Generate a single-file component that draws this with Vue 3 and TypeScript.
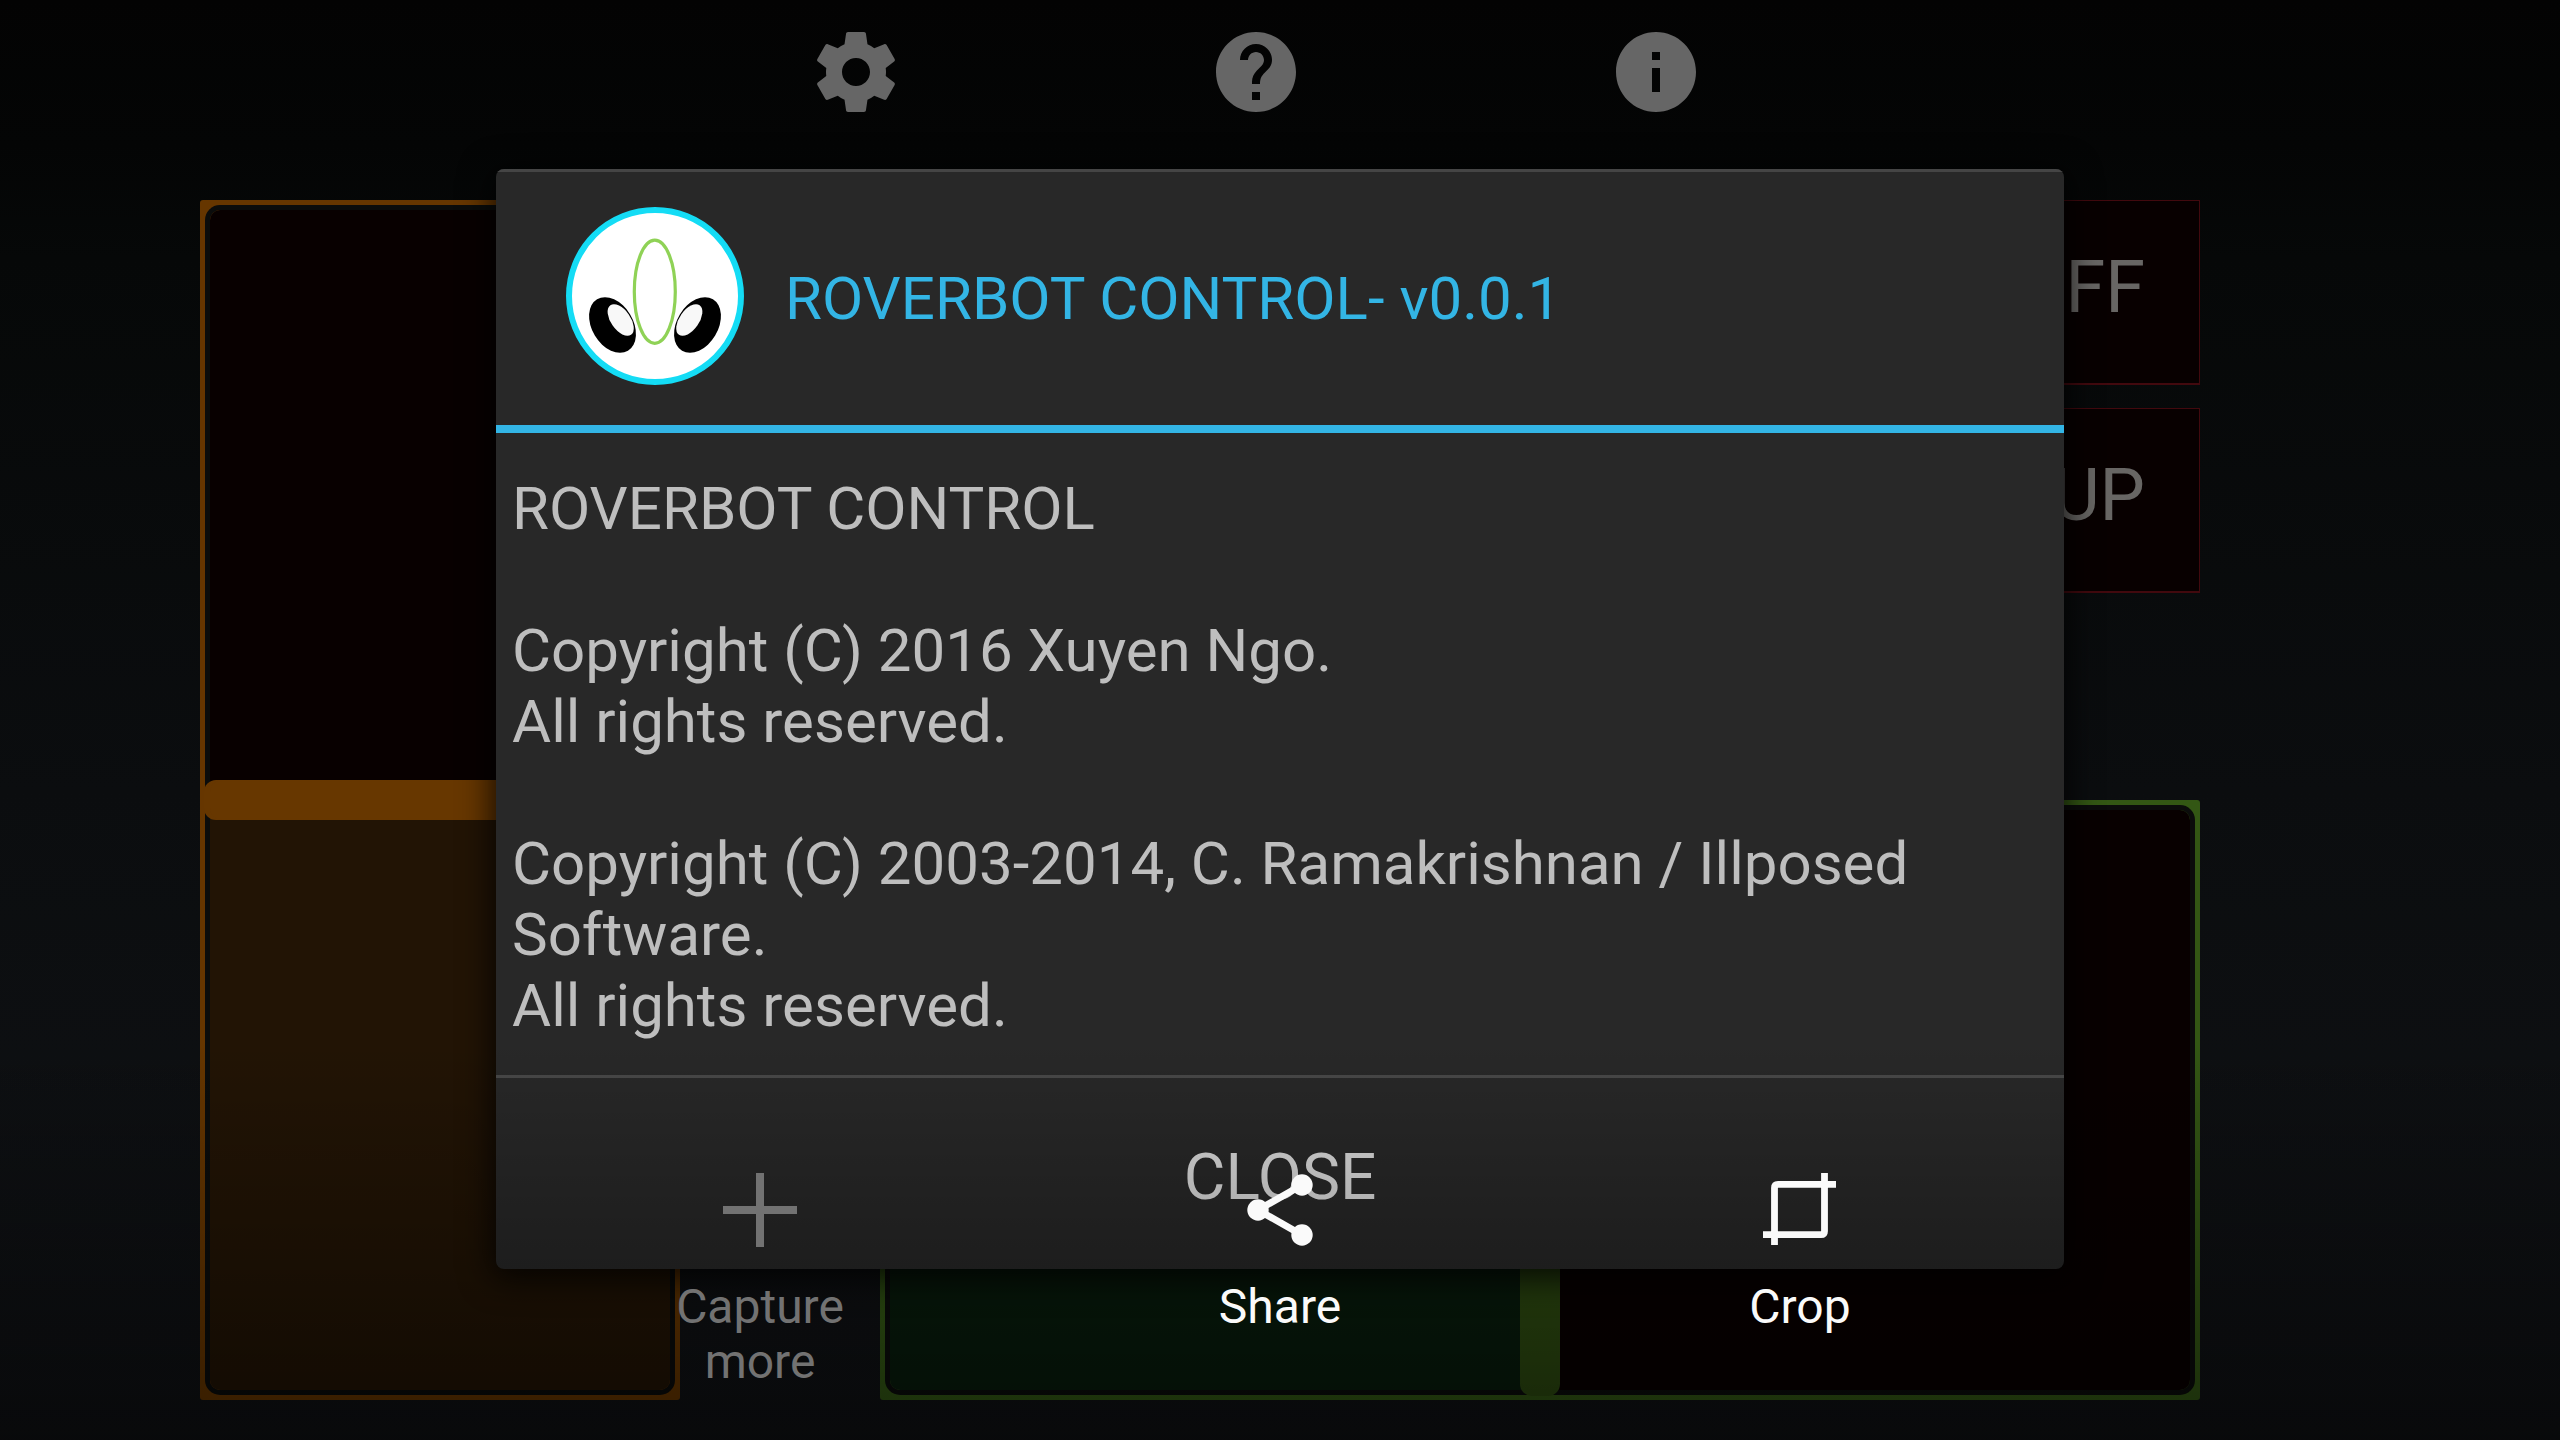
<script setup lang="ts">
import { ref } from 'vue'

interface Switch {
  label: string
}

const drive = ref<number>(50)
const steer = ref<number>(50)

const switches: Switch[] = [{ label: 'OFF' }, { label: 'UP' }]

const notice: string = [
  'ROVERBOT CONTROL',
  '',
  'Copyright (C) 2016 Xuyen Ngo.',
  'All rights reserved.',
  '',
  'Copyright (C) 2003-2014, C. Ramakrishnan / Illposed Software.',
  'All rights reserved.',
].join('\n')
</script>

<template>
  <div class="screen">
    <nav class="toolbar">
      <button class="tool" type="button" aria-label="Settings">
        <svg viewBox="0 0 24 24">
          <path
            d="M19.43 12.98c.04-.32.07-.64.07-.98s-.03-.66-.07-.98l2.11-1.65c.19-.15.24-.42.12-.64l-2-3.46c-.12-.22-.39-.3-.61-.22l-2.49 1c-.52-.4-1.08-.73-1.69-.98l-.38-2.65C14.46 2.18 14.25 2 14 2h-4c-.25 0-.46.18-.49.42l-.38 2.65c-.61.25-1.17.59-1.69.98l-2.49-1c-.23-.09-.49 0-.61.22l-2 3.46c-.13.22-.07.49.12.64l2.11 1.65c-.04.32-.07.65-.07.98s.03.66.07.98l-2.11 1.65c-.19.15-.24.42-.12.64l2 3.46c.12.22.39.3.61.22l2.49-1c.52.4 1.08.73 1.69.98l.38 2.65c.03.24.24.42.49.42h4c.25 0 .46-.18.49-.42l.38-2.65c.61-.25 1.17-.59 1.69-.98l2.49 1c.23.09.49 0 .61-.22l2-3.46c.12-.22.07-.49-.12-.64l-2.11-1.65zM12 15.5c-1.93 0-3.5-1.57-3.5-3.5s1.57-3.5 3.5-3.5 3.5 1.57 3.5 3.5-1.57 3.5-3.5 3.5z"
          />
        </svg>
      </button>
      <button class="tool" type="button" aria-label="Help">
        <svg viewBox="0 0 24 24">
          <path
            d="M12 2C6.48 2 2 6.48 2 12s4.48 10 10 10 10-4.48 10-10S17.52 2 12 2zm1 17h-2v-2h2v2zm2.07-7.75l-.9.92C13.45 12.9 13 13.5 13 15h-2v-.5c0-1.1.45-2.1 1.17-2.83l1.24-1.26c.37-.36.59-.86.59-1.41 0-1.1-.9-2-2-2s-2 .9-2 2H8c0-2.21 1.79-4 4-4s4 1.79 4 4c0 .88-.36 1.68-.93 2.25z"
          />
        </svg>
      </button>
      <button class="tool" type="button" aria-label="About">
        <svg viewBox="0 0 24 24">
          <path
            d="M12 2C6.48 2 2 6.48 2 12s4.48 10 10 10 10-4.48 10-10S17.52 2 12 2zm1 15h-2v-6h2v6zm0-8h-2V7h2v2z"
          />
        </svg>
      </button>
    </nav>

    <main class="controls">
      <div class="frame frame-drive">
        <input v-model="drive" class="slider drive" type="range" min="0" max="100" aria-label="Drive" />
      </div>
      <div class="side">
        <div class="switches">
          <button v-for="s in switches" :key="s.label" class="switch" type="button">{{ s.label }}</button>
        </div>
        <div class="frame frame-steer">
          <input v-model="steer" class="slider steer" type="range" min="0" max="100" aria-label="Steer" />
        </div>
      </div>
    </main>

    <div class="overlay">
      <section class="dialog" role="dialog" aria-labelledby="about-title">
        <header class="dialog-head">
          <svg class="logo" viewBox="25 26 180 180">
            <circle cx="115" cy="116" r="86" fill="#fff" stroke="#14dcf5" stroke-width="6" />
            <g>
              <ellipse cx="72.5" cy="145" rx="20.6" ry="30" transform="rotate(-31 72.5 145)" />
              <ellipse cx="80.7" cy="140" rx="9.8" ry="18" fill="#f8f8f8" transform="rotate(-35 80.7 140)" />
              <ellipse cx="157.5" cy="145" rx="20.6" ry="30" transform="rotate(31 157.5 145)" />
              <ellipse cx="149.3" cy="140" rx="9.8" ry="18" fill="#f8f8f8" transform="rotate(35 149.3 140)" />
            </g>
            <ellipse cx="114.8" cy="111.7" rx="20.5" ry="51.6" fill="none" stroke="#8fd256" stroke-width="3.2" />
          </svg>
          <h1 id="about-title" class="dialog-title">ROVERBOT CONTROL- v0.0.1</h1>
        </header>
        <p class="dialog-body">{{ notice }}</p>
        <button class="dialog-close" type="button">CLOSE</button>
      </section>
    </div>

    <div class="scrim"></div>

    <div class="capture-bar">
      <button class="action" type="button" disabled>
        <svg viewBox="0 0 96 96">
          <path d="M48 11v74M11 48h74" fill="none" stroke="currentColor" stroke-width="8" />
        </svg>
        <span>Capture more</span>
      </button>
      <button class="action" type="button">
        <svg viewBox="0 0 96 96">
          <path d="M70 23L26 48l44 25" fill="none" stroke="currentColor" stroke-width="7" />
          <circle cx="70" cy="23" r="10.7" />
          <circle cx="26" cy="48" r="10.7" />
          <circle cx="70" cy="73" r="10.7" />
        </svg>
        <span>Share</span>
      </button>
      <button class="action" type="button">
        <svg viewBox="0 0 96 96">
          <path
            d="M84 22.3H46.5H26q-3.5 0-3.5 3.5V83M11 72.7H69q3.5 0 3.5-3.5V11"
            fill="none"
            stroke="currentColor"
            stroke-width="6.8"
          />
        </svg>
        <span>Crop</span>
      </button>
    </div>
  </div>
</template>

<style>
body {
  background: #030303;
}
</style>

<style scoped>
.screen {
  position: relative;
  display: flex;
  flex-direction: column;
  min-height: 100vh;
  box-sizing: border-box;
  overflow: hidden;
  background: linear-gradient(#030303 0%, #040505 10%, #060808 18%, #0b0d0f 55%, #101215 100%);
  font-family: Roboto, 'Noto Sans', sans-serif;
}

button {
  margin: 0;
  padding: 0;
  border: 0;
  background: none;
  font: inherit;
  color: inherit;
}

.toolbar {
  display: flex;
  justify-content: center;
  gap: 304px;
  padding: 24px 48px 80px 0;
}

.tool {
  width: 96px;
  height: 96px;
}

.tool svg {
  display: block;
  fill: #666;
}

.controls {
  flex: 1;
  display: grid;
  grid-template-columns: 480fr 1320fr;
  column-gap: 200px;
  padding: 0 360px 40px 200px;
}

.side {
  display: grid;
  grid-template-rows: 1fr 1fr;
}

.switches {
  display: flex;
  flex-direction: column;
  align-items: flex-end;
  gap: 23px;
}

.switch {
  box-sizing: border-box;
  width: 30%;
  height: 185px;
  padding: 0 54px 8px 0;
  border: 1px solid #42090e;
  border-bottom-width: 2px;
  background: #080000;
  color: #686664;
  font-size: 72px;
  line-height: 84px;
  text-align: right;
}

.frame {
  display: flex;
  padding: 10px;
  border-radius: 3px;
}

.frame-drive {
  background: #663600;
}

.frame-steer {
  background: #335714;
}

.slider {
  appearance: none;
  flex: 1;
  min-width: 0;
  margin: 0;
  border-radius: 10px;
  box-shadow: 0 0 0 5px #0b0c0b;
}

.drive {
  writing-mode: vertical-lr;
  direction: rtl;
  background: linear-gradient(#080000 50%, #221405 50%);
}

.steer {
  background: linear-gradient(90deg, #081c0c 50%, #080000 50%);
}

.slider::-webkit-slider-runnable-track {
  width: 100%;
  height: 100%;
}

.slider::-webkit-slider-thumb {
  appearance: none;
  border-radius: 12px;
}

.drive::-webkit-slider-thumb {
  width: 100%;
  height: 40px;
  background: #673700;
  box-shadow: -6px 0 #673700, 6px 0 #673700;
}

.steer::-webkit-slider-thumb {
  width: 40px;
  height: 100%;
  background: #2d4a10;
  box-shadow: 0 -6px #2d4a10, 0 6px #2d4a10;
}

.overlay {
  position: absolute;
  inset: 0;
  display: grid;
  place-items: center;
  padding-bottom: 2px;
}

.dialog {
  width: 61.25%;
  border-radius: 8px;
  overflow: hidden;
  background: #282828;
  box-shadow: 0 6px 32px 4px rgba(0, 0, 0, 0.8);
}

.dialog-head {
  display: flex;
  align-items: center;
  gap: 40px;
  box-sizing: border-box;
  height: 264px;
  padding: 0 69px;
  border-top: 3px solid #454545;
  border-bottom: 8px solid #33b5e5;
}

.logo {
  width: 180px;
  height: 180px;
  margin-bottom: 6px;
}

.dialog-title {
  margin: 0;
  color: #33b5e5;
  font-size: 60px;
  font-weight: 400;
  line-height: 71px;
}

.dialog-body {
  margin: 0;
  padding: 40px 16px 34px;
  color: #bebebe;
  font-size: 60px;
  line-height: 71px;
  white-space: pre-wrap;
}

.dialog-close {
  display: block;
  width: 100%;
  height: 194px;
  padding-top: 8px;
  border-top: 3px solid #484848;
  color: #dcdcdc;
  font-size: 64px;
  line-height: 76px;
}

.scrim {
  position: absolute;
  inset: auto 0 0;
  height: 400px;
  background: linear-gradient(rgba(0, 0, 0, 0), rgba(0, 0, 0, 0.48));
  pointer-events: none;
}

.capture-bar {
  position: absolute;
  inset: auto 0 51px;
  display: flex;
  justify-content: center;
  gap: 280px;
}

.action {
  display: flex;
  flex-direction: column;
  align-items: center;
  gap: 21px;
  width: 240px;
  color: #fafafa;
  font-size: 48px;
  line-height: 55px;
}

.action:disabled {
  color: #727272;
}

.action svg {
  width: 96px;
  height: 96px;
  fill: currentColor;
}
</style>
